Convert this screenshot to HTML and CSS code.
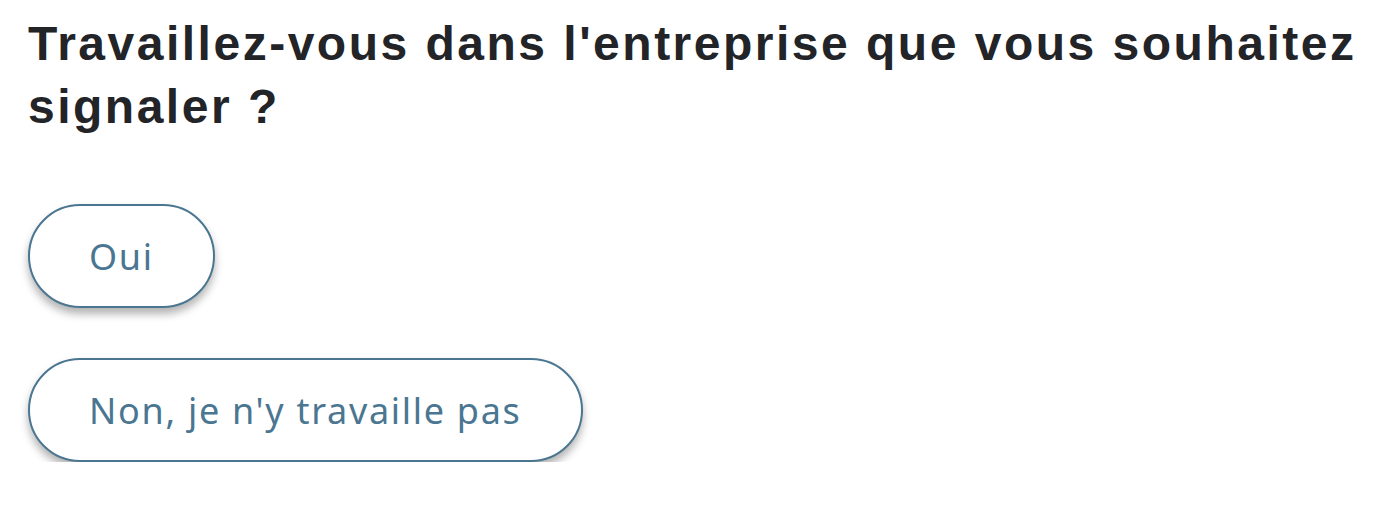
FILE: index.html
```html
<!DOCTYPE html>
<html lang="fr">
<head>
<meta charset="utf-8">
<link rel="stylesheet" href="styles.css">
</head>
<body>
<main class="page">
  <h1 class="question">Travaillez-vous dans l'entreprise que vous souhaitez<br>signaler ?</h1>
  <div class="choices">
    <button class="choice">Oui</button>
    <button class="choice">Non, je n'y travaille pas</button>
  </div>
</main>
</body>
</html>
```
FILE: styles.css
```css
html, body {
  margin: 0;
  padding: 0;
  background: #ffffff;
}
.page {
  padding: 12px 0 0 28px;
}
.question {
  margin: 0;
  font-family: "Liberation Sans", Arial, sans-serif;
  font-weight: 700;
  font-size: 48px;
  line-height: 63px;
  letter-spacing: 2.5px;
  color: #222428;
  white-space: nowrap;
}
.choices {
  display: flex;
  flex-direction: column;
  align-items: flex-start;
  gap: 50px;
  margin-top: 66px;
}
.choice {
  height: 104px;
  padding: 0 59px;
  background: #ffffff;
  border: 2px solid #4a7691;
  border-radius: 52px;
  box-shadow: 0 6px 8px rgba(0, 0, 0, 0.3);
  font-family: "Noto Sans", "Open Sans", sans-serif;
  font-size: 36px;
  letter-spacing: 1.7px;
  color: #4a7691;
  cursor: pointer;
}
```
